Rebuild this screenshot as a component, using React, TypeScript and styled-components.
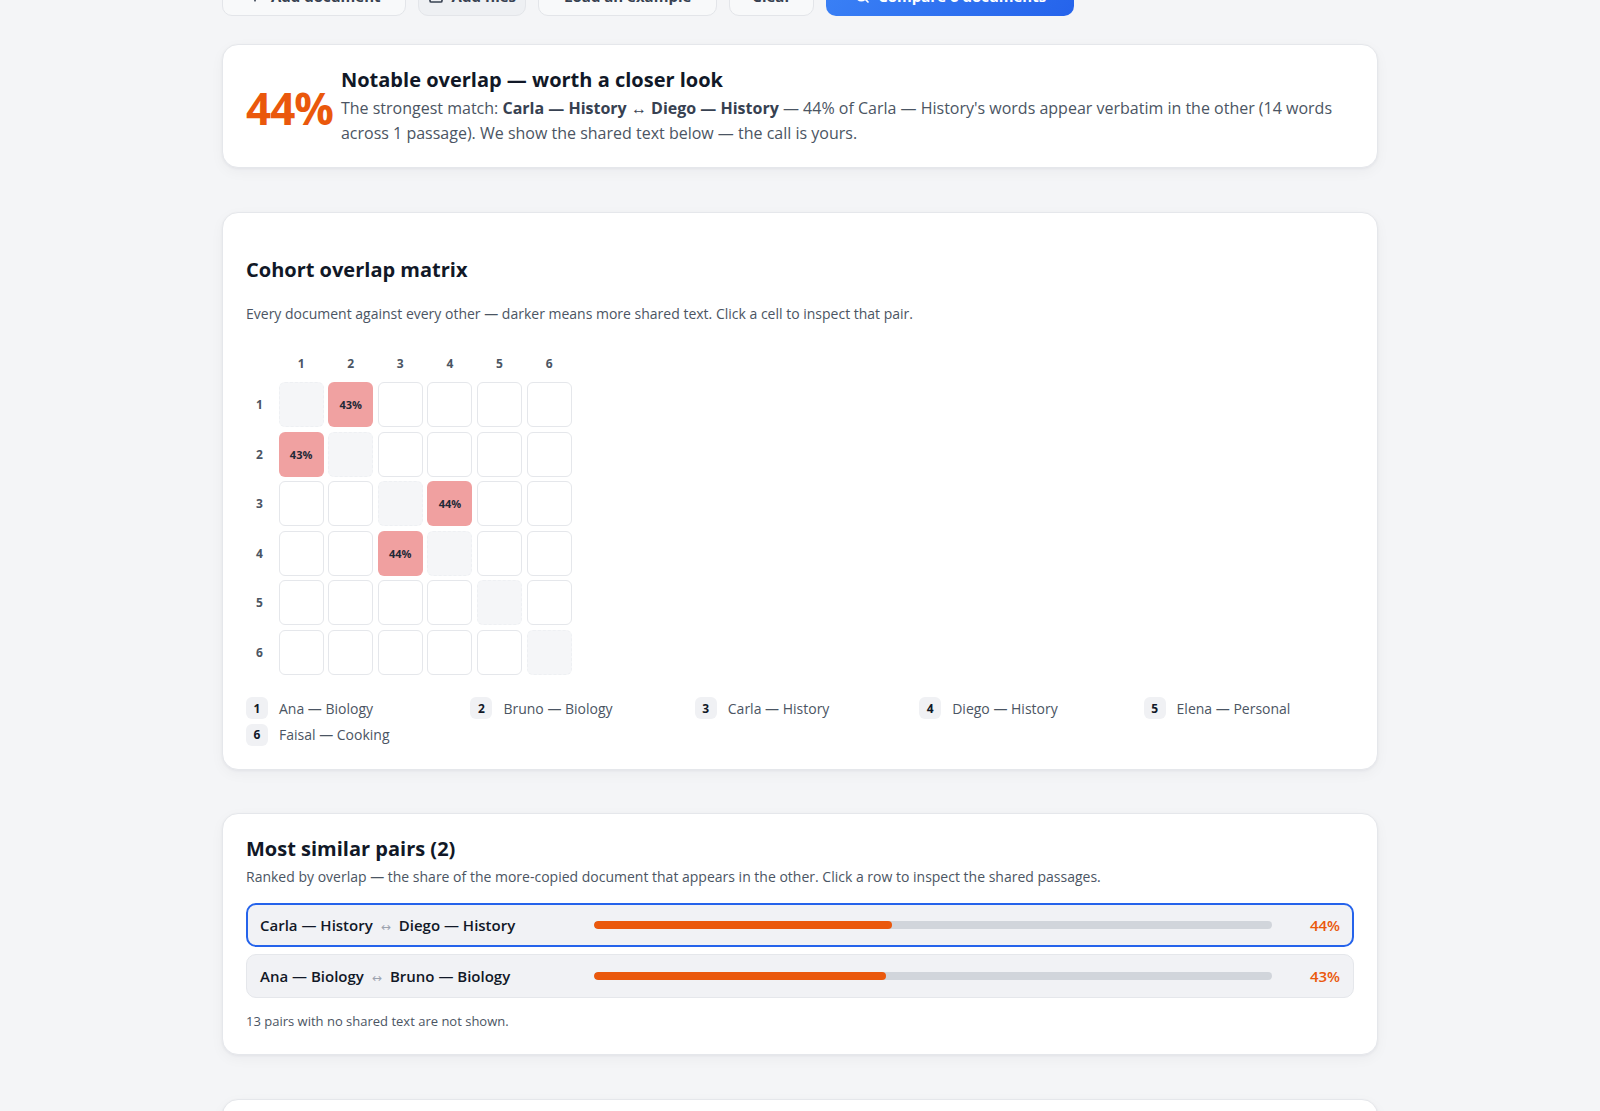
import React from 'react';
import styled, { createGlobalStyle } from 'styled-components';
import { Plus, Upload, Search } from 'lucide-react';

type Doc = { id: number; name: string };
type Pair = { a: number; b: number; pct: number };

const docs: Doc[] = [
  { id: 1, name: 'Ana — Biology' },
  { id: 2, name: 'Bruno — Biology' },
  { id: 3, name: 'Carla — History' },
  { id: 4, name: 'Diego — History' },
  { id: 5, name: 'Elena — Personal' },
  { id: 6, name: 'Faisal — Cooking' },
];

const pairs: Pair[] = [
  { a: 3, b: 4, pct: 44 },
  { a: 1, b: 2, pct: 43 },
];

const overlap = (i: number, j: number) => {
  const p = pairs.find((x) => (x.a === i && x.b === j) || (x.a === j && x.b === i));
  return p ? p.pct : 0;
};

const nameOf = (id: number) => docs.find((d) => d.id === id)!.name;

const GlobalStyle = createGlobalStyle`
  * { box-sizing: border-box; }
  body {
    margin: 0;
    background: #f4f5f7;
    font-family: 'Open Sans', 'Liberation Sans', Arial, sans-serif;
    color: #111827;
  }
`;

export default function App() {
  return (
    <>
      <GlobalStyle />
      <Page>
        <Toolbar>
          <ToolButton>
            <Plus size={16} strokeWidth={2.5} /> Add document
          </ToolButton>
          <ToolButton $muted $pad={9}>
            <Upload size={16} strokeWidth={2.5} /> Add files
          </ToolButton>
          <ToolButton $pad={25}>Load an example</ToolButton>
          <ToolButton $pad={22}>Clear</ToolButton>
          <PrimaryButton>
            <Search size={16} strokeWidth={2.5} /> Compare 6 documents
          </PrimaryButton>
        </Toolbar>

        <Card>
          <Verdict>
            <BigPct>44%</BigPct>
            <div>
              <VerdictTitle>Notable overlap — worth a closer look</VerdictTitle>
              <VerdictText>
                The strongest match: <strong>Carla — History ↔ Diego — History</strong> — 44% of
                Carla — History's words appear verbatim in the other (14 words across 1 passage).
                We show the shared text below — the call is yours.
              </VerdictText>
            </div>
          </Verdict>
        </Card>

        <Card>
          <CardTitle $top={22} $bottom={20}>Cohort overlap matrix</CardTitle>
          <CardText>
            Every document against every other — darker means more shared text. Click a cell to
            inspect that pair.
          </CardText>

          <Matrix>
            <span />
            {docs.map((d) => (
              <HeadLabel key={'h' + d.id}>{d.id}</HeadLabel>
            ))}
            {docs.map((row) => (
              <React.Fragment key={'r' + row.id}>
                <RowLabel>{row.id}</RowLabel>
                {docs.map((col) => {
                  if (row.id === col.id) return <Cell key={col.id} $diag />;
                  const pct = overlap(row.id, col.id);
                  return (
                    <Cell
                      key={col.id}
                      $filled={pct > 0}
                      style={pct > 0 ? { background: `rgba(220, 38, 38, ${pct / 100})` } : undefined}
                    >
                      {pct > 0 ? `${pct}%` : ''}
                    </Cell>
                  );
                })}
              </React.Fragment>
            ))}
          </Matrix>

          <Legend>
            {docs.map((d) => (
              <LegendItem key={d.id}>
                <Badge>{d.id}</Badge>
                {d.name}
              </LegendItem>
            ))}
          </Legend>
        </Card>

        <Card>
          <CardTitle $top={0} $bottom={4}>Most similar pairs (2)</CardTitle>
          <CardText>
            Ranked by overlap — the share of the more-copied document that appears in the other.
            Click a row to inspect the shared passages.
          </CardText>

          <PairList>
            {pairs.map((p, i) => (
              <PairRow key={i} $selected={i === 0}>
                <PairLabel>
                  {nameOf(p.a)}
                  <Arrow>↔</Arrow>
                  {nameOf(p.b)}
                </PairLabel>
                <Track>
                  <Fill style={{ width: `${p.pct}%` }} />
                </Track>
                <PairPct>{p.pct}%</PairPct>
              </PairRow>
            ))}
          </PairList>

          <Footnote>13 pairs with no shared text are not shown.</Footnote>
        </Card>

        <Card>
          <CardTitle $top={0} $bottom={5}>Shared passages</CardTitle>
          <CardText>Carla — History ↔ Diego — History</CardText>
          <Spacer />
        </Card>
      </Page>
    </>
  );
}

const Page = styled.div`
  width: 1156px;
  margin: -24px auto 0;
  display: flex;
  flex-direction: column;
  gap: 43.5px;
  padding-bottom: 60px;
`;

const Toolbar = styled.div`
  display: flex;
  gap: 12px;
  margin-bottom: -15.5px;
`;

const ToolButton = styled.button<{ $muted?: boolean; $pad?: number }>`
  height: 40px;
  padding: 0 ${(p) => p.$pad ?? 24}px;
  display: inline-flex;
  align-items: center;
  gap: 8px;
  border: 1px solid #e3e5e9;
  border-radius: 10px;
  background: ${(p) => (p.$muted ? '#eef0f3' : '#f8f9fa')};
  color: #374151;
  font-family: inherit;
  font-size: 15px;
  font-weight: 700;
`;

const PrimaryButton = styled.button`
  height: 40px;
  padding: 0 28px;
  display: inline-flex;
  align-items: center;
  gap: 8px;
  border: none;
  border-radius: 10px;
  background: linear-gradient(135deg, #3b82f6 0%, #2563eb 100%);
  color: #fff;
  font-family: inherit;
  font-size: 15px;
  font-weight: 700;
`;

const Card = styled.section`
  background: #fff;
  border: 1px solid #e5e7eb;
  border-radius: 16px;
  box-shadow: 0 1px 3px rgba(15, 23, 42, 0.05), 0 4px 14px rgba(15, 23, 42, 0.04);
  padding: 21px 23px;
`;

const Verdict = styled.div`
  display: flex;
  align-items: center;
  gap: 8px;
  padding-bottom: 1px;
`;

const BigPct = styled.div`
  font-size: 44px;
  font-weight: 700;
  color: #ea580c;
  line-height: 1;
  margin-top: 4px;
  letter-spacing: -1px;
`;

const VerdictTitle = styled.h3`
  margin: 0 0 2px;
  font-size: 20px;
  line-height: 28px;
  font-weight: 700;
  color: #111827;
`;

const VerdictText = styled.p`
  margin: 0;
  font-size: 16px;
  line-height: 24.5px;
  color: #4b5563;

  strong {
    color: #374151;
    font-weight: 700;
  }
`;

const CardTitle = styled.h2<{ $top: number; $bottom: number }>`
  margin: ${(p) => p.$top}px 0 ${(p) => p.$bottom}px;
  font-size: 20px;
  line-height: 28px;
  font-weight: 700;
  color: #111827;
`;

const CardText = styled.p`
  margin: 0;
  font-size: 14px;
  line-height: 20px;
  color: #4b5563;
`;

const Matrix = styled.div`
  margin-top: 26px;
  display: grid;
  grid-template-columns: 28px repeat(6, 45px);
  grid-auto-rows: 45px;
  grid-template-rows: 28px;
  gap: 4.6px;
`;

const HeadLabel = styled.div`
  display: flex;
  align-items: center;
  justify-content: center;
  font-size: 12px;
  font-weight: 700;
  color: #4b5563;
`;

const RowLabel = styled(HeadLabel)`
  justify-content: flex-start;
  padding-left: 10px;
`;

const Cell = styled.div<{ $diag?: boolean; $filled?: boolean }>`
  border-radius: 6px;
  display: flex;
  align-items: center;
  justify-content: center;
  font-size: 11px;
  font-weight: 700;
  color: #1f2937;
  background: ${(p) => (p.$diag ? '#f5f6f8' : '#fff')};
  border: 1.5px ${(p) => (p.$diag ? 'dashed #eef0f3' : p.$filled ? 'solid transparent' : 'solid #e5e7eb')};
`;

const Legend = styled.div`
  margin: 22px 0 2px;
  display: grid;
  grid-template-columns: repeat(5, 1fr);
  column-gap: 14px;
  row-gap: 4.5px;
`;

const LegendItem = styled.div`
  display: flex;
  align-items: center;
  gap: 11px;
  font-size: 14px;
  color: #4b5563;
`;

const Badge = styled.span`
  width: 22px;
  height: 22px;
  border-radius: 6px;
  background: #f0f1f4;
  display: inline-flex;
  align-items: center;
  justify-content: center;
  font-size: 12px;
  font-weight: 700;
  color: #111827;
`;

const PairList = styled.div`
  margin-top: 16px;
  display: flex;
  flex-direction: column;
  gap: 7px;
`;

const PairRow = styled.div<{ $selected?: boolean }>`
  height: 44px;
  display: flex;
  align-items: center;
  gap: 14px;
  padding: 0 ${(p) => (p.$selected ? 12 : 13)}px;
  background: #f1f2f5;
  border-radius: 10px;
  border: ${(p) => (p.$selected ? '2px solid #2563eb' : '1px solid #e5e7eb')};
`;

const PairLabel = styled.div`
  width: 320px;
  flex-shrink: 0;
  font-size: 15px;
  font-weight: 600;
  color: #111827;
`;

const Arrow = styled.span`
  font-family: 'DejaVu Sans', sans-serif;
  color: #9ca3af;
  font-size: 12px;
  font-weight: 400;
  line-height: 1;
  margin: 0 8px;
`;

const Track = styled.div`
  flex: 1;
  height: 8px;
  border-radius: 4px;
  background: #d1d5db;
  overflow: hidden;
`;

const Fill = styled.div`
  height: 100%;
  border-radius: 4px;
  background: #ea580c;
`;

const PairPct = styled.div`
  width: 54px;
  text-align: right;
  font-size: 15px;
  font-weight: 600;
  color: #ea580c;
`;

const Footnote = styled.p`
  margin: 13px 0 2px;
  font-size: 13px;
  line-height: 20px;
  color: #4b5563;
`;

const Spacer = styled.div`
  height: 200px;
`;
